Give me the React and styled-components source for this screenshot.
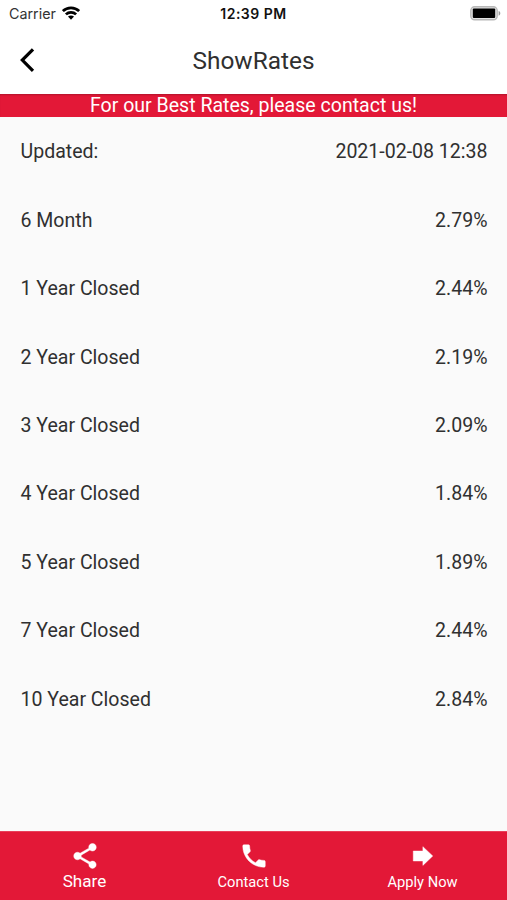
import React from "react";
import styled, { createGlobalStyle } from "styled-components";

const GlobalStyle = createGlobalStyle`
  * { box-sizing: border-box; }
  html, body { margin: 0; padding: 0; background: #fafafa; }
`;

const Screen = styled.div`
  width: 507px;
  height: 900px;
  display: flex;
  flex-direction: column;
  overflow: hidden;
  background: #fafafa;
  color: #303030;
  font-family: Roboto, sans-serif;
`;

const StatusBar = styled.div`
  height: 27px;
  flex: none;
  display: grid;
  grid-template-columns: 1fr auto 1fr;
  align-items: center;
  padding: 0 8px;
  background: #fff;
  color: #111;
  font-family: Inter, sans-serif;
`;

const Carrier = styled.div`
  display: flex;
  align-items: center;
  gap: 6px;
  padding-left: 1px;
  color: #333;
  font-size: 14.3px;
`;

const Wifi = styled.svg`
  display: block;
  margin-bottom: 2px;
`;

const Clock = styled.div`
  font-weight: 600;
  font-size: 14px;
  letter-spacing: 0.5px;
`;

const Battery = styled.svg`
  justify-self: end;
  display: block;
  margin-right: -2px;
`;

const Header = styled.header`
  height: 67px;
  flex: none;
  display: grid;
  grid-template-columns: 56px 1fr 56px;
  align-items: center;
  background: #fff;
`;

const BackButton = styled.button`
  height: 100%;
  padding: 0 0 2px 19px;
  border: 0;
  background: none;
  display: flex;
  align-items: center;
`;

const Title = styled.h1`
  margin: 0;
  text-align: center;
  font-size: 24.4px;
  line-height: 30px;
  font-weight: 400;
`;

const Banner = styled.div`
  height: 23px;
  flex: none;
  background: #e31837;
  box-shadow: inset 0 2px 2px -1px rgba(0, 0, 0, 0.22);
  color: #fff;
  text-align: center;
  font-size: 19.55px;
  line-height: 23px;
`;

const RateList = styled.main`
  flex: 1;
  min-height: 0;
  padding-top: 1.1px;
`;

const RateRow = styled.div`
  height: 68.42px;
  padding: 0 19.5px 0 20.5px;
  display: flex;
  align-items: center;
  justify-content: space-between;
  font-size: 19.55px;
  line-height: 24px;
`;

const TabBar = styled.nav`
  height: 69px;
  flex: none;
  display: grid;
  grid-template-columns: repeat(3, 1fr);
  background: #e31837;
  border-top: 1px solid #e8405a;
`;

const Tab = styled.button`
  border: 0;
  padding: 9px 0 0;
  background: none;
  color: #fff;
  display: flex;
  flex-direction: column;
  align-items: center;
  font-family: inherit;
`;

const TabIcon = styled.svg`
  width: 30px;
  height: 30px;
  flex: none;
  fill: currentColor;
  stroke: currentColor;
  stroke-width: 0.35px;
`;

const TabLabel = styled.span`
  margin-top: ${(p) => (p.$active ? "0" : "1px")};
  font-size: ${(p) => (p.$active ? "17.1px" : "14.7px")};
  line-height: 20px;
`;

const rates = [
  ["Updated:", "2021-02-08 12:38"],
  ["6 Month", "2.79%"],
  ["1 Year Closed", "2.44%"],
  ["2 Year Closed", "2.19%"],
  ["3 Year Closed", "2.09%"],
  ["4 Year Closed", "1.84%"],
  ["5 Year Closed", "1.89%"],
  ["7 Year Closed", "2.44%"],
  ["10 Year Closed", "2.84%"],
];

const tabs = [
  {
    label: "Share",
    active: true,
    path: "M18 16.08c-.76 0-1.44.3-1.96.77L8.91 12.7c.05-.23.09-.46.09-.7s-.04-.47-.09-.7l7.05-4.11c.54.5 1.25.81 2.04.81 1.66 0 3-1.34 3-3s-1.34-3-3-3-3 1.34-3 3c0 .24.04.47.09.7L8.04 9.81C7.5 9.31 6.79 9 6 9c-1.66 0-3 1.34-3 3s1.34 3 3 3c.79 0 1.5-.31 2.04-.81l7.12 4.16c-.05.21-.08.43-.08.65 0 1.61 1.31 2.92 2.92 2.92s2.92-1.31 2.92-2.92-1.31-2.92-2.92-2.92z",
  },
  {
    label: "Contact Us",
    path: "M6.62 10.79c1.44 2.83 3.76 5.14 6.59 6.59l2.2-2.2c.27-.27.67-.36 1.02-.24 1.12.37 2.33.57 3.57.57.55 0 1 .45 1 1V20c0 .55-.45 1-1 1-9.39 0-17-7.61-17-17 0-.55.45-1 1-1h3.5c.55 0 1 .45 1 1 0 1.25.2 2.45.57 3.57.11.35.03.74-.25 1.02l-2.2 2.2z",
  },
  { label: "Apply Now", path: "M4.2 8h7.7V4.5l7.9 7.5-7.9 7.5V16H4.2z" },
];

function WifiIcon() {
  return (
    <Wifi width="18" height="14" viewBox="0 0 18 14" fill="none" stroke="#000" strokeWidth="2.7">
      <path d="M.9 5.1C5.3.7 12.7.7 17.1 5.1" />
      <path d="M3.9 8.4c2.8-2.8 7.4-2.8 10.2 0" />
      <path d="M6 10.6c1.7-1.5 4.3-1.5 6 0L9 13.8z" fill="#000" stroke="none" />
    </Wifi>
  );
}

export default function App() {
  return (
    <>
      <GlobalStyle />
      <Screen>
        <StatusBar>
          <Carrier>
            <span>Carrier</span>
            <WifiIcon />
          </Carrier>
          <Clock>12:39 PM</Clock>
          <Battery width="31" height="15" viewBox="0 0 31 15">
            <rect x=".8" y=".8" width="26.4" height="13" rx="3.8" fill="#e4e4e4" stroke="#b8b8b8" strokeWidth="1.4" />
            <rect x="2.8" y="2.6" width="22.4" height="9.4" rx="1" fill="#000" />
            <path d="M28.6 5c2.3.7 2.3 4 0 4.7z" fill="#999" />
          </Battery>
        </StatusBar>
        <Header>
          <BackButton aria-label="Back">
            <svg width="16" height="26" viewBox="0 0 16 26" fill="none" stroke="#000" strokeWidth="3.2">
              <path d="M14 2.3 3.3 13.1 14 23.9" />
            </svg>
          </BackButton>
          <Title>ShowRates</Title>
        </Header>
        <Banner>For our Best Rates, please contact us!</Banner>
        <RateList>
          {rates.map(([term, value]) => (
            <RateRow key={term}>
              <span>{term}</span>
              <span>{value}</span>
            </RateRow>
          ))}
        </RateList>
        <TabBar>
          {tabs.map((tab) => (
            <Tab key={tab.label}>
              <TabIcon viewBox="0 0 24 24">
                <path d={tab.path} />
              </TabIcon>
              <TabLabel $active={tab.active}>{tab.label}</TabLabel>
            </Tab>
          ))}
        </TabBar>
      </Screen>
    </>
  );
}
